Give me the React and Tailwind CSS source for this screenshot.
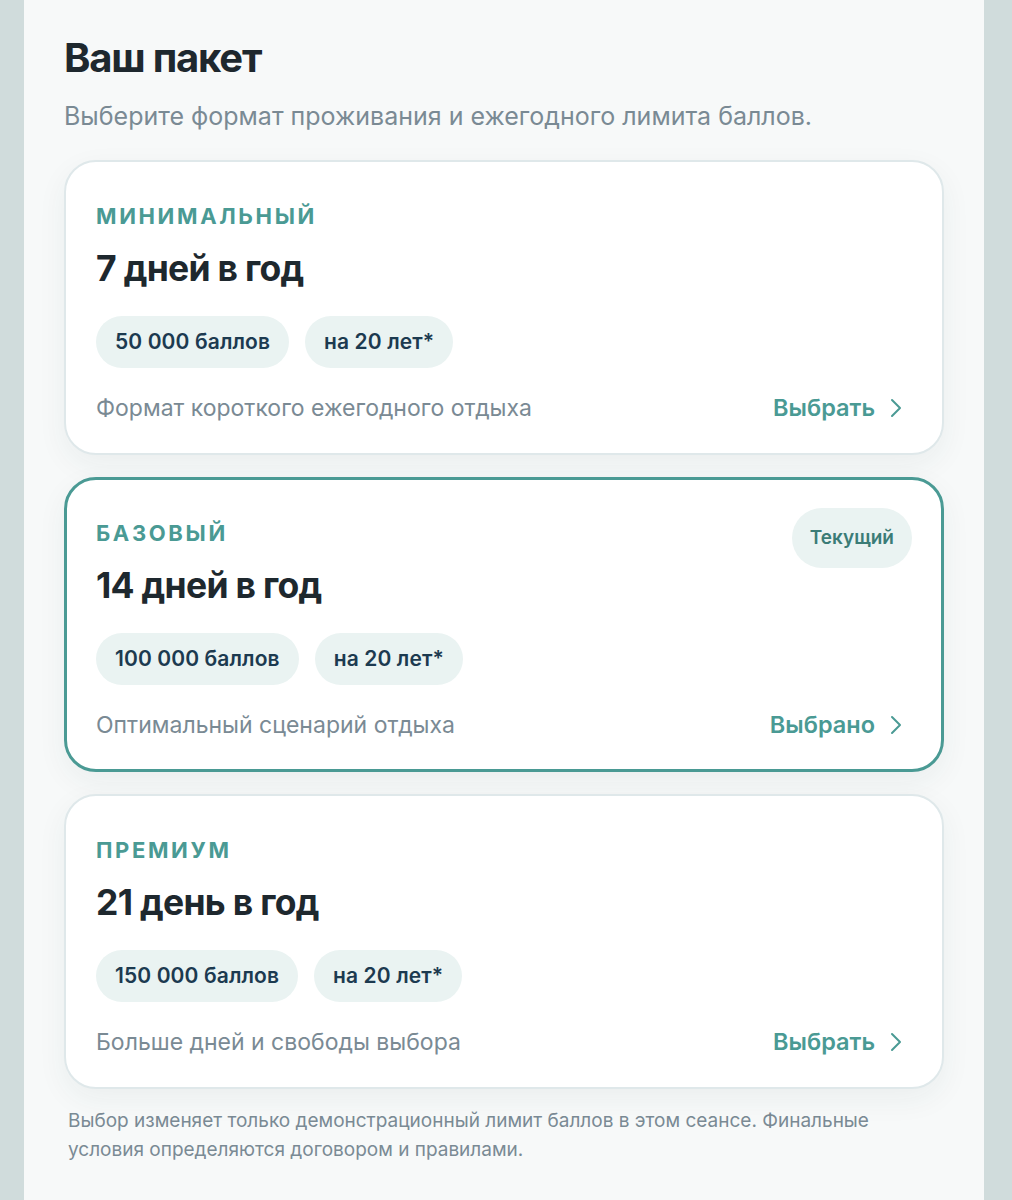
import React, { useState } from "react";
import { ChevronRight } from "lucide-react";

const packages = [
  {
    id: "min",
    label: "МИНИМАЛЬНЫЙ",
    title: "7 дней в год",
    points: "50 000 баллов",
    term: "на 20 лет*",
    note: "Формат короткого ежегодного отдыха",
  },
  {
    id: "base",
    label: "БАЗОВЫЙ",
    title: "14 дней в год",
    points: "100 000 баллов",
    term: "на 20 лет*",
    note: "Оптимальный сценарий отдыха",
    current: true,
  },
  {
    id: "premium",
    label: "ПРЕМИУМ",
    title: "21 день в год",
    points: "150 000 баллов",
    term: "на 20 лет*",
    note: "Больше дней и свободы выбора",
  },
];

const PackageCard = ({ pkg, selected, onSelect }) => (
  <div
    onClick={onSelect}
    className={`relative bg-white rounded-[32px] cursor-pointer shadow-[0_10px_30px_rgba(30,60,70,0.06)] ${
      selected
        ? "border-[3px] border-[#4a9a94] px-[29px] pt-[37px] pb-[28px]"
        : "border-2 border-[#dfe8ea] px-[30px] pt-[38px] pb-[29px]"
    }`}
  >
    {pkg.current && (
      <div className="absolute top-[28px] right-[29px] h-[60px] px-[18px] rounded-full bg-[#eaf3f2] flex items-center text-[19px] font-semibold text-[#3b7c77]">
        Текущий
      </div>
    )}
    <div className="text-[22px] leading-[32px] font-bold tracking-[0.12em] text-[#4a9a94]">
      {pkg.label}
    </div>
    <div className="mt-[15px] text-[35.5px] leading-[44px] font-bold tracking-[-0.02em] text-[#1e282e]">
      {pkg.title}
    </div>
    <div className="mt-[25px] flex gap-4">
      <span className="h-[52px] px-[19px] rounded-full bg-[#eaf3f2] flex items-center text-[21px] font-semibold text-[#1c3a50] tracking-[0.005em]">
        {pkg.points}
      </span>
      <span className="h-[52px] px-[19px] rounded-full bg-[#eaf3f2] flex items-center text-[21px] font-semibold text-[#1c3a50] tracking-[0.005em]">
        {pkg.term}
      </span>
    </div>
    <div className="mt-[24px] flex items-center justify-between h-[32px]">
      <span className="text-[23px] text-[#7a8a94]">{pkg.note}</span>
      <span className="flex items-center text-[23.5px] font-semibold text-[#4a9a94]">
        {selected ? "Выбрано" : "Выбрать"}
        <ChevronRight size={32} strokeWidth={1.5} className="ml-[5px]" />
      </span>
    </div>
  </div>
);

export default function App() {
  const [selected, setSelected] = useState("base");

  return (
    <div
      className="min-h-[1200px] bg-[#d0dcdc] pl-6 pr-7"
      style={{ fontFamily: "Inter, 'Noto Sans', sans-serif" }}
    >
      <div className="min-h-[1200px] bg-[#f7f9f9] px-10 pt-[34px] pb-10">
        <h1 className="text-[40px] leading-[48px] font-bold tracking-[-0.03em] text-[#1e282e]">
          Ваш пакет
        </h1>
        <p className="mt-[18px] text-[25px] leading-[32px] text-[#7a8a94]">
          Выберите формат проживания и ежегодного лимита баллов.
        </p>
        <div className="mt-[28px] flex flex-col gap-[22px]">
          {packages.map((pkg) => (
            <PackageCard
              key={pkg.id}
              pkg={pkg}
              selected={selected === pkg.id}
              onSelect={() => setSelected(pkg.id)}
            />
          ))}
        </div>
        <p className="mt-[17px] px-1 text-[19px] leading-[29px] text-[#7a8a94] max-w-[840px]">
          Выбор изменяет только демонстрационный лимит баллов в этом сеансе. Финальные
          условия определяются договором и правилами.
        </p>
      </div>
    </div>
  );
}
